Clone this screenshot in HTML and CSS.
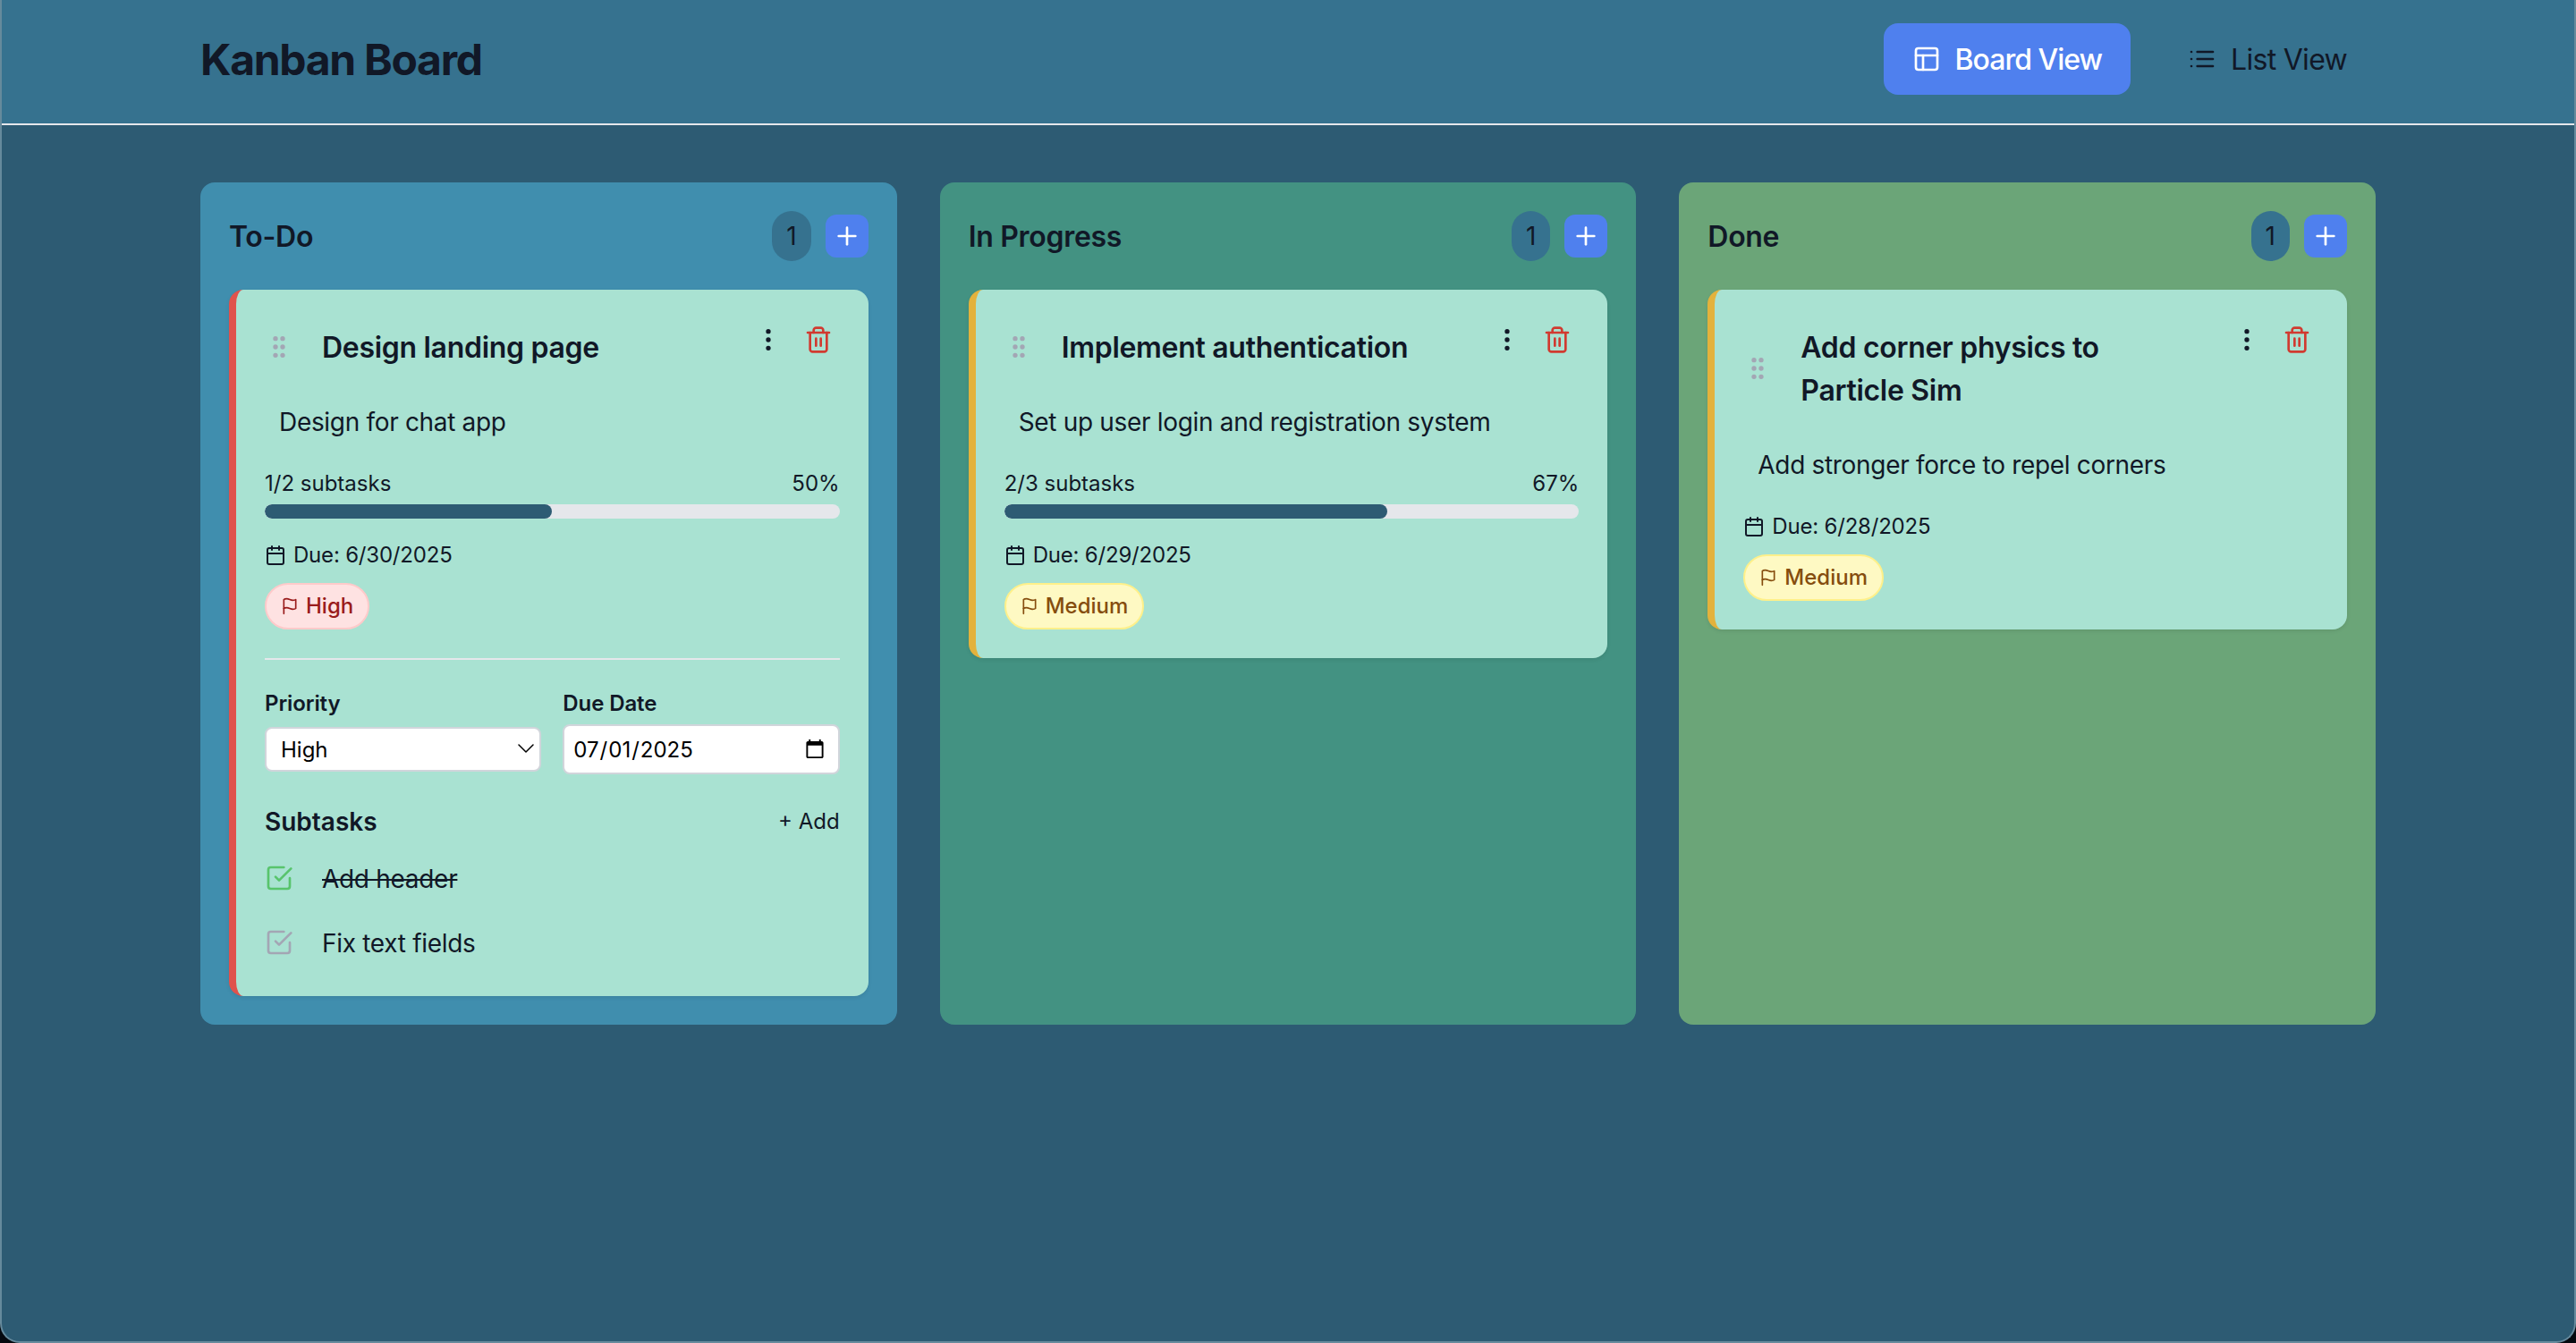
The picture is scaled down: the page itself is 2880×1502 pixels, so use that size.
FILE: index.html
```html
<!DOCTYPE html>
<html lang="en">
<head>
  <meta charset="UTF-8">
  <title>Kanban Board</title>
  <link rel="stylesheet" href="styles.css">
</head>
<body>
  <svg class="sprite" xmlns="http://www.w3.org/2000/svg">
    <symbol id="i-layout" viewBox="0 0 24 24"><rect width="18" height="18" x="3" y="3" rx="2"/><path d="M3 9h18"/><path d="M9 21V9"/></symbol>
    <symbol id="i-list" viewBox="0 0 24 24"><line x1="8" x2="21" y1="6" y2="6"/><line x1="8" x2="21" y1="12" y2="12"/><line x1="8" x2="21" y1="18" y2="18"/><line x1="3" x2="3.01" y1="6" y2="6"/><line x1="3" x2="3.01" y1="12" y2="12"/><line x1="3" x2="3.01" y1="18" y2="18"/></symbol>
    <symbol id="i-plus" viewBox="0 0 24 24"><path d="M5 12h14"/><path d="M12 5v14"/></symbol>
    <symbol id="i-grip" viewBox="0 0 24 24"><circle cx="9" cy="12" r="1"/><circle cx="9" cy="5" r="1"/><circle cx="9" cy="19" r="1"/><circle cx="15" cy="12" r="1"/><circle cx="15" cy="5" r="1"/><circle cx="15" cy="19" r="1"/></symbol>
    <symbol id="i-more" viewBox="0 0 24 24"><circle cx="12" cy="12" r="1"/><circle cx="12" cy="5" r="1"/><circle cx="12" cy="19" r="1"/></symbol>
    <symbol id="i-trash" viewBox="0 0 24 24"><path d="M3 6h18"/><path d="M19 6v14c0 1-1 2-2 2H7c-1 0-2-1-2-2V6"/><path d="M8 6V4c0-1 1-2 2-2h4c1 0 2 1 2 2v2"/><line x1="10" x2="10" y1="11" y2="17"/><line x1="14" x2="14" y1="11" y2="17"/></symbol>
    <symbol id="i-calendar" viewBox="0 0 24 24"><rect width="18" height="18" x="3" y="4" rx="2"/><line x1="16" x2="16" y1="2" y2="6"/><line x1="8" x2="8" y1="2" y2="6"/><line x1="3" x2="21" y1="10" y2="10"/></symbol>
    <symbol id="i-flag" viewBox="0 0 24 24"><path d="M4 15s1-1 4-1 5 2 8 2 4-1 4-1V3s-1 1-4 1-5-2-8-2-4 1-4 1z"/><line x1="4" x2="4" y1="22" y2="15"/></symbol>
    <symbol id="i-check" viewBox="0 0 24 24"><path d="m9 11 3 3L22 4"/><path d="M21 12v7a2 2 0 0 1-2 2H5a2 2 0 0 1-2-2V5a2 2 0 0 1 2-2h11"/></symbol>
  </svg>

  <div class="window">
    <header class="topbar">
      <div class="topbar-inner">
        <h1 class="app-title">Kanban Board</h1>
        <nav class="views">
          <button class="view-btn active"><svg class="icon"><use href="#i-layout"/></svg><span>Board View</span></button>
          <button class="view-btn"><svg class="icon"><use href="#i-list"/></svg><span>List View</span></button>
        </nav>
      </div>
    </header>

    <main class="board">
      <!-- To-Do -->
      <section class="column col-todo">
        <div class="col-head">
          <h2 class="col-title">To-Do</h2>
          <div class="col-tools">
            <span class="count">1</span>
            <button class="add-btn"><svg class="icon"><use href="#i-plus"/></svg></button>
          </div>
        </div>
        <article class="card prio-high">
          <div class="card-top">
            <div class="card-name">
              <svg class="icon grip"><use href="#i-grip"/></svg>
              <h3 class="card-title">Design landing page</h3>
            </div>
            <div class="card-actions">
              <button class="icon-btn"><svg class="icon"><use href="#i-more"/></svg></button>
              <button class="icon-btn danger"><svg class="icon"><use href="#i-trash"/></svg></button>
            </div>
          </div>
          <p class="card-desc">Design for chat app</p>
          <div class="progress-labels"><span>1/2 subtasks</span><span>50%</span></div>
          <div class="progress"><div class="progress-fill" style="width: 50%"></div></div>
          <div class="due"><svg class="icon-sm"><use href="#i-calendar"/></svg>Due: 6/30/2025</div>
          <span class="tag tag-high"><svg class="icon-flag"><use href="#i-flag"/></svg>High</span>

          <div class="details">
            <div class="fields">
              <div class="field">
                <label class="field-label">Priority</label>
                <div class="control">
                  <select class="select">
                    <option>High</option>
                    <option>Medium</option>
                    <option>Low</option>
                  </select>
                  <svg class="chevron" viewBox="0 0 18 11"><path d="M1 1l8 8 8-8"/></svg>
                </div>
              </div>
              <div class="field">
                <label class="field-label">Due Date</label>
                <div class="control">
                  <input class="date" type="date" value="2025-07-01">
                </div>
              </div>
            </div>
            <div class="subtasks-head">
              <h4 class="subtasks-title">Subtasks</h4>
              <button class="link-btn">+ Add</button>
            </div>
            <ul class="subtasks">
              <li class="subtask done"><svg class="icon"><use href="#i-check"/></svg><span>Add header</span></li>
              <li class="subtask"><svg class="icon"><use href="#i-check"/></svg><span>Fix text fields</span></li>
            </ul>
          </div>
        </article>
      </section>

      <!-- In Progress -->
      <section class="column col-progress">
        <div class="col-head">
          <h2 class="col-title">In Progress</h2>
          <div class="col-tools">
            <span class="count">1</span>
            <button class="add-btn"><svg class="icon"><use href="#i-plus"/></svg></button>
          </div>
        </div>
        <article class="card prio-medium">
          <div class="card-top">
            <div class="card-name">
              <svg class="icon grip"><use href="#i-grip"/></svg>
              <h3 class="card-title">Implement authentication</h3>
            </div>
            <div class="card-actions">
              <button class="icon-btn"><svg class="icon"><use href="#i-more"/></svg></button>
              <button class="icon-btn danger"><svg class="icon"><use href="#i-trash"/></svg></button>
            </div>
          </div>
          <p class="card-desc">Set up user login and registration system</p>
          <div class="progress-labels"><span>2/3 subtasks</span><span>67%</span></div>
          <div class="progress"><div class="progress-fill" style="width: 66.67%"></div></div>
          <div class="due"><svg class="icon-sm"><use href="#i-calendar"/></svg>Due: 6/29/2025</div>
          <span class="tag tag-medium"><svg class="icon-flag"><use href="#i-flag"/></svg>Medium</span>
        </article>
      </section>

      <!-- Done -->
      <section class="column col-done">
        <div class="col-head">
          <h2 class="col-title">Done</h2>
          <div class="col-tools">
            <span class="count">1</span>
            <button class="add-btn"><svg class="icon"><use href="#i-plus"/></svg></button>
          </div>
        </div>
        <article class="card prio-medium">
          <div class="card-top">
            <div class="card-name">
              <svg class="icon grip"><use href="#i-grip"/></svg>
              <h3 class="card-title">Add corner physics to Particle Sim</h3>
            </div>
            <div class="card-actions">
              <button class="icon-btn"><svg class="icon"><use href="#i-more"/></svg></button>
              <button class="icon-btn danger"><svg class="icon"><use href="#i-trash"/></svg></button>
            </div>
          </div>
          <p class="card-desc">Add stronger force to repel corners</p>
          <div class="due due-flat"><svg class="icon-sm"><use href="#i-calendar"/></svg>Due: 6/28/2025</div>
          <span class="tag tag-medium"><svg class="icon-flag"><use href="#i-flag"/></svg>Medium</span>
        </article>
      </section>
    </main>
  </div>
</body>
</html>
```

FILE: styles.css
```css
* { box-sizing: border-box; }
html, body { margin: 0; height: 100%; }
body { background: #05090f; color: #111827; font-family: Inter, "Noto Sans", sans-serif; font-size: 28px; }
h1, h2, h3, h4, p, ul { margin: 0; padding: 0; }
button { font: inherit; color: inherit; background: none; border: 0; padding: 0; }
.sprite { display: none; }

.icon, .icon-sm, .icon-flag, .chevron { fill: none; stroke: currentColor; stroke-width: 2; stroke-linecap: round; stroke-linejoin: round; flex: none; }
.icon { width: 32px; height: 32px; }
.icon-sm { width: 24px; height: 24px; }
.icon-flag { width: 20px; height: 20px; }

/* text sits a pixel lower in the line box than the default metrics give */
.app-title, .view-btn span, .col-title, .card-title, .progress-labels, .due, .field-label, .subtasks-title, .link-btn, .subtask span { padding-top: 1px; margin-bottom: -1px; }

.window { min-height: 1502px; background: #2d5b73; border: 2px solid #668a9c; border-top: 0; border-radius: 0 0 22px 22px; overflow: hidden; }

/* top bar */
.topbar { height: 140px; margin: 0 -2px; background: #36728f; border-bottom: 2px solid #e5e7eb; }
.topbar-inner { max-width: 2560px; margin: 0 auto; padding: 26px 64px 0; display: flex; align-items: center; justify-content: space-between; }
.app-title { font-size: 48px; line-height: 80px; font-weight: 700; letter-spacing: -1.3px; }
.views { display: flex; gap: 32px; }
.view-btn { display: flex; align-items: center; gap: 16px; height: 80px; padding: 0 32px; border-radius: 16px; font-size: 32px; line-height: 48px; letter-spacing: -.7px; }
.view-btn.active { background: #4f80ee; color: #fff; font-weight: 500; letter-spacing: -1px; }

/* board */
.board { max-width: 2560px; margin: 0 auto; padding: 64px; display: grid; grid-template-columns: repeat(3, 1fr); gap: 48px; align-items: stretch; }
.column { padding: 32px; border-radius: 16px; }
.col-todo { background: #408eae; }
.col-progress { background: #439282; }
.col-done { background: #6ba578; }
.col-head { display: flex; align-items: center; justify-content: space-between; margin-bottom: 32px; }
.col-title { font-size: 32px; line-height: 48px; font-weight: 600; letter-spacing: -.3px; }
.col-tools { display: flex; align-items: center; gap: 16px; }
.count { padding: 8px 16px; border-radius: 999px; background: #36728f; font-size: 28px; line-height: 40px; }
.add-btn { display: flex; padding: 8px; border-radius: 12px; background: #4f80ee; color: #fff; }

/* cards */
.card { padding: 32px; border-radius: 16px; border-left: 8px solid; background: #a9e2d2; box-shadow: 0 2px 4px rgba(0, 0, 0, .08); }
.prio-high { border-left-color: #e0524c; }
.prio-medium { border-left-color: #e3b23c; }
.card-top { display: flex; align-items: flex-start; justify-content: space-between; }
.card-name { display: flex; align-items: center; gap: 32px; padding: 8px 32px 8px 0; flex: 1; }
.grip { color: #a3a6b4; }
.card-title { font-size: 32px; line-height: 48px; font-weight: 600; letter-spacing: -.3px; }
.card-actions { display: flex; gap: 8px; flex: none; }
.icon-btn { display: flex; padding: 8px; }
.danger { color: #d13a30; }
.card-desc { padding-left: 16px; margin: 32px 0; font-size: 28px; line-height: 40px; letter-spacing: -.32px; }
.progress-labels { display: flex; justify-content: space-between; font-size: 24px; line-height: 32px; margin-bottom: 7px; }
.progress { height: 16px; border-radius: 999px; background: #e5e7eb; overflow: hidden; }
.progress-fill { height: 100%; border-radius: 999px; background: #2d5b73; }
.due { display: flex; align-items: center; gap: 8px; margin-top: 24px; font-size: 24px; line-height: 32px; letter-spacing: -.2px; }
.due-flat { margin-top: 0; }
.tag { display: inline-flex; align-items: center; gap: 8px; margin-top: 16px; padding: 8px 16px; border: 2px solid; border-radius: 999px; font-size: 24px; line-height: 32px; font-weight: 500; vertical-align: top; }
.tag-high { background: #fee2e2; border-color: #fecaca; color: #991b1b; }
.tag-medium { background: #fef9c3; border-color: #fef08a; color: #854d0e; }

/* expanded card */
.details { margin-top: 32px; padding-top: 32px; border-top: 2px solid #e5e7eb; }
.fields { display: grid; grid-template-columns: 1fr 1fr; gap: 24px; }
.field-label { display: block; margin-bottom: 7px; font-size: 24px; line-height: 32px; font-weight: 600; letter-spacing: -.1px; }
.control { position: relative; display: flex; align-items: center; height: 56px; }
.select, .date { width: 100%; border: 2px solid #d1d5db; border-radius: 8px; background: #fff; color: #000; font-family: inherit; font-size: 24px; outline: 0; }
.select { height: 50px; padding: 0 16px; appearance: none; }
.date { height: 56px; padding: 0 14px 0 9px; }
.date::-webkit-calendar-picker-indicator { width: 24px; height: 24px; padding: 0; margin: 0; }
.chevron { position: absolute; right: 8px; top: 22px; width: 18px; height: 11px; stroke-width: 1.5; color: #000; pointer-events: none; }
.subtasks-head { display: flex; align-items: center; justify-content: space-between; margin: 32px 0 16px; }
.subtasks-title { font-size: 28px; line-height: 40px; font-weight: 600; }
.link-btn { font-size: 24px; line-height: 32px; }
.subtasks { list-style: none; display: flex; flex-direction: column; gap: 16px; }
.subtask { display: flex; align-items: center; gap: 32px; height: 56px; font-size: 28px; line-height: 40px; letter-spacing: -.3px; }
.subtask .icon { color: #a3a6b4; }
.subtask.done .icon { color: #58c46c; }
.subtask.done span { text-decoration: line-through; }
```
